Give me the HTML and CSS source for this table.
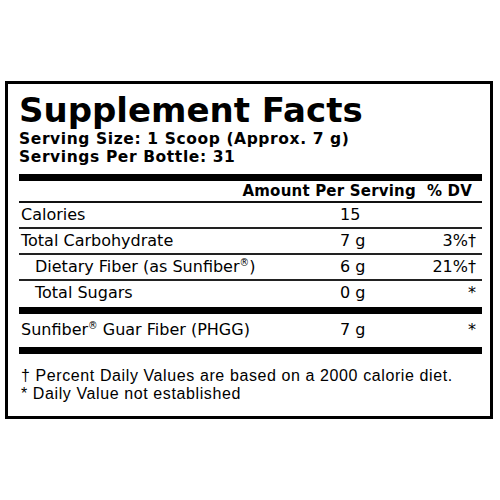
FILE: index.html
```html
<!doctype html>
<html>
    <head>
        <link rel="stylesheet" href="styles.css">
    </head>

    <body>
    <div class="label">
        <h1 class="label-title">Supplement Facts</h1>
        <div class="serving">Serving Size: 1 Scoop (Approx. 7 g)</div>
        <div class="serving">Servings Per Bottle: 31</div>

        <div class="bar"></div>

        <div class="facts-head">
            <span>Amount Per Serving</span>
            <span>% DV</span>
        </div>

        <div class="fact-row">
            <div class="fact-name">Calories</div>
            <div class="fact-amount">15</div>
            <div class="fact-dv"></div>
        </div>
        <div class="fact-row">
            <div class="fact-name">Total Carbohydrate</div>
            <div class="fact-amount">7 g</div>
            <div class="fact-dv">3%†</div>
        </div>
        <div class="fact-row">
            <div class="fact-name sub">Dietary Fiber (as Sunfiber<sup>®</sup>)</div>
            <div class="fact-amount">6 g</div>
            <div class="fact-dv">21%†</div>
        </div>
        <div class="fact-row last">
            <div class="fact-name sub">Total Sugars</div>
            <div class="fact-amount">0 g</div>
            <div class="fact-dv">*</div>
        </div>

        <div class="bar"></div>

        <div class="fact-row other">
            <div class="fact-name">Sunfiber<sup>®</sup> Guar Fiber (PHGG)</div>
            <div class="fact-amount">7 g</div>
            <div class="fact-dv">*</div>
        </div>

        <div class="bar"></div>

        <div class="notes">
            <div>† Percent Daily Values are based on a 2000 calorie diet.</div>
            <div>* Daily Value not established</div>
        </div>
    </div>
    </body>
</html>
```

FILE: styles.css
```css
body {
    margin: 0;
    background-color: #fff;
    color: #000;
    font-family: "DejaVu Sans", sans-serif;
}
* {
    box-sizing: border-box;
}

.label {
    width: 488px;
    margin: 81px 0 0 5px;
    border: 3px solid #000;
    padding: 9px 8px 13px 11px;
}

.label-title {
    margin: 0;
    font-size: 34px;
    line-height: 34px;
    font-weight: bold;
}

.serving {
    font-size: 15.5px;
    line-height: 18px;
    font-weight: bold;
    letter-spacing: 0.6px;
}
.label-title + .serving {
    margin-top: 3px;
}

.bar {
    height: 7px;
    margin-top: 8px;
    background-color: #000;
}
.fact-row.last + .bar {
    margin-top: 2px;
}
.fact-row.other + .bar {
    margin-top: 0;
}

.facts-head {
    display: flex;
    justify-content: flex-end;
    gap: 11px;
    padding-right: 10px;
    font-size: 15px;
    line-height: 20px;
    font-weight: bold;
    letter-spacing: 0.2px;
    border-bottom: 2px solid #111;
}

.fact-row {
    display: grid;
    grid-template-columns: 321px 1fr 1fr;
    font-size: 16px;
    line-height: 24px;
    border-bottom: 2px solid #222;
}
.fact-row.last {
    border-bottom: none;
}
.fact-row.other {
    border-bottom: none;
    padding: 4px 0 5px;
}

.fact-name {
    padding-left: 2px;
}
.fact-name.sub {
    padding-left: 16px;
}
.fact-dv {
    text-align: right;
    padding-right: 6px;
}

sup {
    font-size: 0.6em;
    line-height: 0;
    vertical-align: 0.6em;
}

.notes {
    margin-top: 13px;
    padding-left: 2px;
    font-family: "Liberation Sans", Arial, sans-serif;
    font-size: 16px;
    line-height: 18px;
    letter-spacing: 0.6px;
}
```
